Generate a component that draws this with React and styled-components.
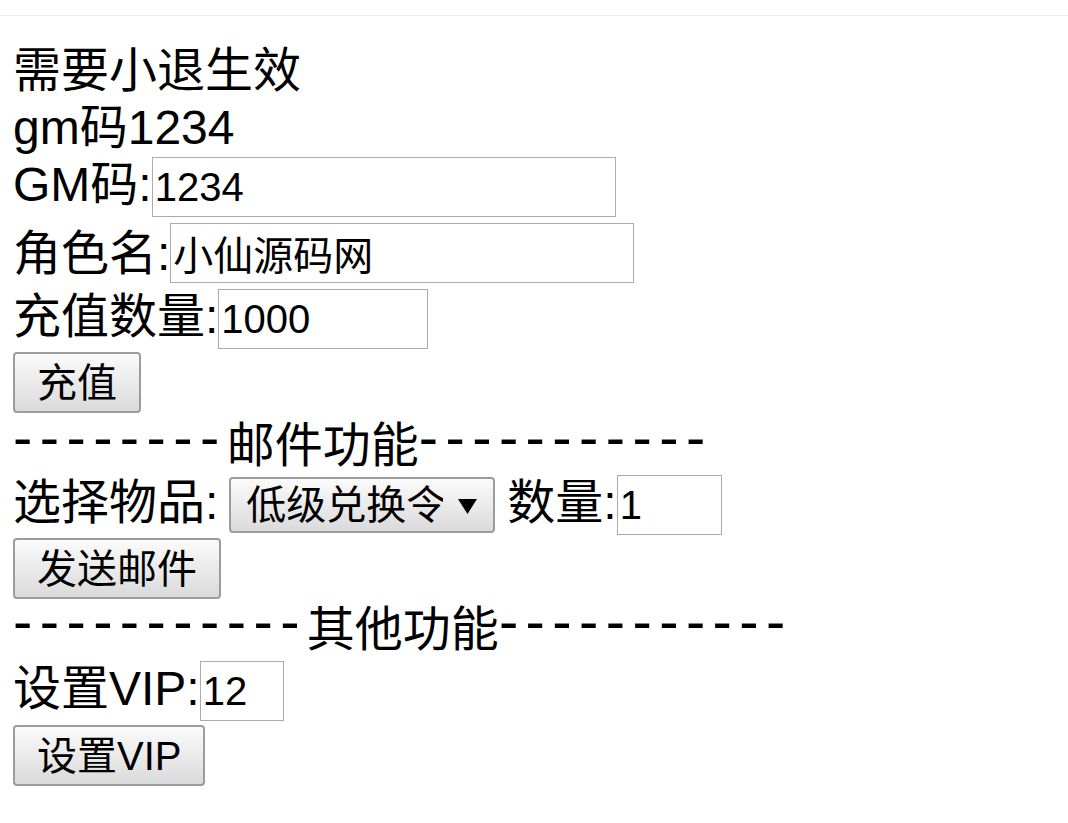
import React from "react";
import styled, { createGlobalStyle } from "styled-components";

const FONT = `"Liberation Sans", "Noto Sans CJK SC", sans-serif`;

const GlobalStyle = createGlobalStyle`
  html, body {
    margin: 0;
    padding: 0;
    background: #ffffff;
  }
  body {
    font-family: ${FONT};
    font-size: 48px;
    color: #000;
  }
`;

const Page = styled.div`
  display: flex;
  flex-direction: column;
  min-height: 823px;
`;

const TopBar = styled.div`
  height: 15px;
  border-bottom: 1px solid #ececec;
`;

const Content = styled.form`
  display: flex;
  flex-direction: column;
  align-items: flex-start;
  padding: 26px 13px 30px;
  margin: 0;
`;

const TextLine = styled.div`
  line-height: 57px;
  margin-top: ${(p) => p.$mt || 0}px;
  white-space: nowrap;
`;

const Dashes = styled.span`
  font-size: 58px;
  line-height: 0;
  letter-spacing: 7.4px;
  position: relative;
  top: -5px;
`;

const FieldRow = styled.div`
  display: flex;
  align-items: baseline;
  margin-top: ${(p) => p.$mt || 0}px;
  white-space: nowrap;
`;

const Label = styled.label`
  line-height: 48px;
  margin-right: ${(p) => p.$gap || 0}px;
`;

const TextInput = styled.input`
  box-sizing: border-box;
  width: ${(p) => p.$w}px;
  height: 60px;
  margin: 0;
  padding: 0 2px;
  border: 1px solid #ababab;
  border-radius: 0;
  background: #fff;
  color: #000;
  font: 40px ${FONT};
  outline: none;
`;

const Button = styled.button`
  box-sizing: border-box;
  height: 61px;
  margin: ${(p) => p.$mt || 0}px 0 0;
  padding: 0 22px;
  border: 2px solid #9c9c9c;
  border-radius: 4px;
  background: linear-gradient(#fbfbfb, #dadada);
  color: #000;
  font: 40px ${FONT};
  line-height: 1;
  cursor: pointer;
`;

const SelectWrap = styled.span`
  position: relative;
  display: inline-flex;
  margin-right: 12px;
`;

const Select = styled.select`
  appearance: none;
  -webkit-appearance: none;
  box-sizing: border-box;
  width: 266px;
  height: 56px;
  margin: 0;
  padding: 0 50px 0 15px;
  border: 2px solid #9c9c9c;
  border-radius: 4px;
  background: linear-gradient(#fbfbfb, #dadada);
  color: #000;
  font: 40px ${FONT};
  outline: none;
`;

const Caret = styled.svg`
  position: absolute;
  right: 18px;
  top: 50%;
  margin-top: -6px;
  pointer-events: none;
`;

export default function App() {
  return (
    <Page>
      <GlobalStyle />
      <TopBar />
      <Content onSubmit={(e) => e.preventDefault()}>
        <TextLine>需要小退生效</TextLine>
        <TextLine>gm码1234</TextLine>

        <FieldRow $mt={1}>
          <Label>GM码:</Label>
          <TextInput $w={464} defaultValue="1234" />
        </FieldRow>
        <FieldRow $mt={6}>
          <Label>角色名:</Label>
          <TextInput $w={464} defaultValue="小仙源码网" />
        </FieldRow>
        <FieldRow $mt={6}>
          <Label>充值数量:</Label>
          <TextInput $w={210} defaultValue="1000" />
        </FieldRow>
        <Button type="button" $mt={3}>充值</Button>

        <TextLine $mt={4}>
          <Dashes>--------</Dashes>邮件功能<Dashes>-----------</Dashes>
        </TextLine>

        <FieldRow $mt={1}>
          <Label $gap={11}>选择物品:</Label>
          <SelectWrap>
            <Select defaultValue="low">
              <option value="low">低级兑换令</option>
            </Select>
            <Caret width="19" height="15" viewBox="0 0 19 15">
              <polygon points="0,0 19,0 9.5,15" fill="#000" />
            </Caret>
          </SelectWrap>
          <Label>数量:</Label>
          <TextInput $w={105} defaultValue="1" />
        </FieldRow>
        <Button type="button" $mt={3}>发送邮件</Button>

        <TextLine $mt={2}>
          <Dashes>-----------</Dashes>其他功能<Dashes>-----------</Dashes>
        </TextLine>

        <FieldRow $mt={3}>
          <Label>设置VIP:</Label>
          <TextInput $w={84} defaultValue="12" />
        </FieldRow>
        <Button type="button" $mt={4}>设置VIP</Button>
      </Content>
    </Page>
  );
}
